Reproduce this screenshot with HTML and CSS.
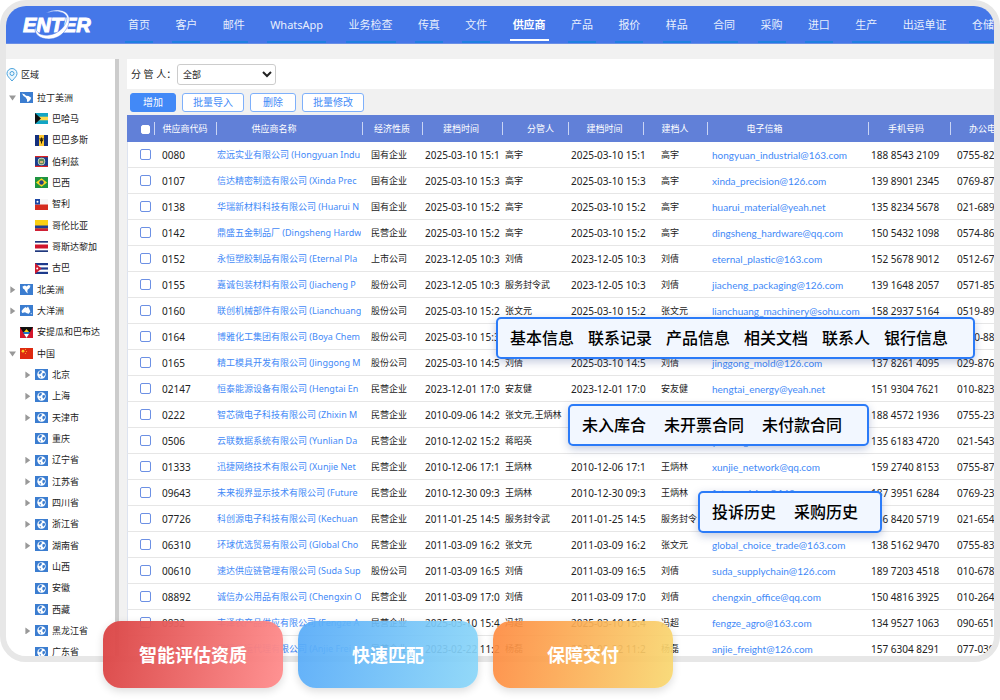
FILE: index.html
```html
<!DOCTYPE html>
<html lang="zh-CN">
<head>
<meta charset="utf-8">
<title>供应商</title>
<link rel="stylesheet" href="styles.css">
</head>
<body>
<svg class="sprite" aria-hidden="true">
  <symbol id="i-pin" viewBox="0 0 12 14"><path d="M6 13C3 9.500 1 8 1 5.500a5 5 0 0 1 10 0C11 8 9 9.500 6 13z" fill="#eef7fd" stroke="#4ba3dc"/><circle cx="6" cy="5.500" r="2" fill="none" stroke="#4ba3dc"/></symbol>
  <symbol id="i-globe" viewBox="0 0 13 11"><rect width="13" height="11" fill="#3b7dd0"/><circle cx="6.500" cy="5.500" r="4.200" fill="#fff"/><path d="M4.600 2.200l1.800-.4.600 1.400-1.200 1L5 5.400 3.400 4.200zM7.400 4.400l2-.6.800 1.600-1.600 2.400-1.200-1.400zM4.400 6.800l1.600.8-.4 1.400z" fill="#3b7dd0"/></symbol>
  <symbol id="i-samerica" viewBox="0 0 13 11"><rect width="13" height="11" fill="#3b7dd0"/><path d="M2 1.500l2.500.8L6 3.800l2.500.2 2.700 1.700-1 2.300L8 10l-1-.5V7.500L5.500 5.200 3.500 4z" fill="#fff"/></symbol>
  <symbol id="i-namerica" viewBox="0 0 13 11"><rect width="13" height="11" fill="#3b7dd0"/><path d="M2.500 2.500L5 1.500l1.500 1L8.500 1l2 .8-1 2.400-1.800 1.300-.4 2L7.800 9.500 6 8 4.500 5.500 3 4.500z" fill="#fff"/></symbol>
  <symbol id="i-oceania" viewBox="0 0 13 11"><rect width="13" height="11" fill="#3b7dd0"/><path d="M1.500 6l1.800-2.200L5.500 2l1.200 1L8 1.500l1.500 3 .8 2-1.500 2.200-2-.5L5 7.200l-2.800.9zM10.500 8.500l1.300-.8-.5 1.800z" fill="#fff"/></symbol>
  <symbol id="f-bahamas" viewBox="0 0 13 11"><rect width="13" height="11" fill="#12a5c4"/><rect y="3.700" width="13" height="3.600" fill="#fbd94c"/><path d="M0 0l6 5.500L0 11z" fill="#111"/></symbol>
  <symbol id="f-barbados" viewBox="0 0 13 11"><rect width="13" height="11" fill="#15307e"/><rect x="4" width="5" height="11" fill="#fcc62f"/><path d="M5 3l.5 3H7.500L8 3M6.500 2.500V8.500" fill="none" stroke="#2b2208"/></symbol>
  <symbol id="f-belize" viewBox="0 0 13 11"><rect width="13" height="11" fill="#d22"/><rect y="1.200" width="13" height="8.600" fill="#1c3f8c"/><circle cx="6.500" cy="5.500" r="3.700" fill="#dfe8d6"/><circle cx="6.500" cy="5.500" r="3" fill="#5d8a57"/><path d="M5 5h3v2H5z" fill="#d9b37a"/></symbol>
  <symbol id="f-brazil" viewBox="0 0 13 11"><rect width="13" height="11" fill="#1f9440"/><path d="M6.500 1.200L12 5.500 6.500 9.800 1 5.500z" fill="#fbd81f"/><circle cx="6.500" cy="5.500" r="2.200" fill="#27407f"/></symbol>
  <symbol id="f-chile" viewBox="0 0 13 11"><rect width="13" height="11" fill="#f6f6f6"/><rect y="5.500" width="13" height="5.500" fill="#d52b1e"/><rect width="5" height="5.500" fill="#1c47a5"/><circle cx="2.500" cy="2.700" r="1" fill="#fff"/></symbol>
  <symbol id="f-colombia" viewBox="0 0 13 11"><rect width="13" height="11" fill="#fccf12"/><rect y="5.500" width="13" height="3" fill="#1c3d96"/><rect y="8.500" width="13" height="2.500" fill="#d02035"/></symbol>
  <symbol id="f-costarica" viewBox="0 0 13 11"><rect width="13" height="11" fill="#20387e"/><rect y="1.700" width="13" height="7.600" fill="#fff"/><rect y="3.500" width="13" height="4" fill="#d0142c"/></symbol>
  <symbol id="f-cuba" viewBox="0 0 13 11"><rect width="13" height="11" fill="#1d3a8c"/><rect y="2.200" width="13" height="2.200" fill="#fff"/><rect y="6.600" width="13" height="2.200" fill="#fff"/><path d="M0 0l6.500 5.500L0 11z" fill="#d01a30"/><circle cx="2.200" cy="5.500" r="1" fill="#fff"/></symbol>
  <symbol id="f-antigua" viewBox="0 0 13 11"><rect width="13" height="11" fill="#d5152c"/><path d="M0 0h13L6.500 11z" fill="#111"/><path d="M2.800 5h7.400L9 7H4z" fill="#1c74c8"/><path d="M4 7h5l-2.500 4z" fill="#fff"/><path d="M4 5l2.500-3L9 5z" fill="#fcd116"/></symbol>
  <symbol id="f-china" viewBox="0 0 13 11"><rect width="13" height="11" fill="#de2910"/><circle cx="3" cy="3.200" r="1.400" fill="#fccb2a"/><path d="M5 1h1v1H5zM6 3h1v1H6zM5 5h1v1H5z" fill="#f3a023"/></symbol>
</svg>

<div class="frame">
  <header class="topbar">
    <a class="logo" href="#" aria-label="ENTER">
      <svg viewBox="0 0 74 34" width="74" height="34">
        <text class="logo-text" x="2" y="24">ENTER</text>
        <path d="M25 5C33 0 46 1 48 9C50 19 40 31 28 31C18 31 13 26 14 18C15 25 20 28 28 27C38 26 46 17 46 10C45 3 34 2 25 5z" fill="#fff" stroke="#4577e8" stroke-width=".5"/>
      </svg>
    </a>
    <nav class="nav" id="nav"></nav>
  </header>
  <div class="body">
    <aside class="sidebar">
      <div class="side-title"><svg class="pin"><use href="#i-pin"/></svg>区域</div>
      <ul class="tree" id="tree"></ul>
    </aside>
    <main class="main">
      <form class="filter">
        <label for="owner">分 管 人：</label>
        <select id="owner"><option>全部</option></select>
      </form>
      <div class="toolbar">
        <button class="btn primary" type="button">增加</button>
        <button class="btn" type="button">批量导入</button>
        <button class="btn" type="button">删除</button>
        <button class="btn" type="button">批量修改</button>
      </div>
      <table class="grid">
        <colgroup>
          <col class="c-check"><col class="c-code"><col class="c-name"><col class="c-kind"><col class="c-time"><col class="c-owner"><col class="c-time2"><col class="c-creator"><col class="c-mail"><col class="c-phone"><col>
        </colgroup>
        <thead><tr>
          <th><input type="checkbox" aria-label="全选"></th><th>供应商代码</th><th class="h-name">供应商名称</th><th>经济性质</th><th class="h-time">建档时间</th><th class="h-owner">分管人</th><th class="h-time">建档时间</th><th>建档人</th><th class="h-mail">电子信箱</th><th class="h-phone">手机号码</th><th class="h-office">办公电话</th>
        </tr></thead>
        <tbody id="rows"></tbody>
      </table>
    </main>
  </div>
</div>

<div class="pop pop-info"><span>基本信息</span><span>联系记录</span><span>产品信息</span><span>相关文档</span><span>联系人</span><span>银行信息</span></div>
<div class="pop pop-contract"><span>未入库合</span><span>未开票合同</span><span>未付款合同</span></div>
<div class="pop pop-history"><span>投诉历史</span><span>采购历史</span></div>

<div class="features">
  <button class="feature red" type="button">智能评估资质</button>
  <button class="feature blue" type="button">快速匹配</button>
  <button class="feature orange" type="button">保障交付</button>
</div>
<script src="script.js"></script>
</body>
</html>
```

FILE: styles.css
```css
* { box-sizing: border-box; }
body {
  margin: 0;
  position: relative;
  height: 100vh;
  overflow: hidden;
  background: #fff;
  color: #222;
  font: 9px/12px "Noto Sans", "Noto Sans CJK SC", sans-serif;
}
a { text-decoration: none; color: inherit; }
button, select, input { font: inherit; margin: 0; }
.sprite { position: absolute; width: 0; height: 0; }

.frame {
  display: flex;
  flex-direction: column;
  height: calc(100vh - 38px);
  border: 6px solid #e7e7e7;
  border-radius: 26px;
  overflow: hidden;
  background: #f1f1f1;
}

/* top bar */
.topbar {
  display: flex;
  flex: none;
  height: 38px;
  background: #4577e8;
  border-bottom: 1px solid #6a8ee6;
}
.logo { flex: none; width: 119px; padding: 2px 0 0 15px; }
.logo-text {
  font: italic bold 20px "Liberation Sans", sans-serif;
  fill: #fff;
  stroke: #fff;
}
.nav { display: flex; flex: 1; justify-content: space-between; margin-right: -3px; }
.nav a {
  display: flex;
  align-items: center;
  padding: 3px 3px 0;
  border-bottom: 2px solid #1f7fe0;
  color: #e8effd;
  font-size: 11px;
  white-space: nowrap;
}
.nav a.active { color: #fff; font-weight: bold; border-color: #fff; margin-bottom: 2px; padding-top: 5px; }

.body { display: flex; flex: 1; min-height: 0; padding-top: 15px; }

/* region tree */
.sidebar {
  display: flex;
  flex-direction: column;
  flex: none;
  width: 113px;
  background: #fff;
  border-right: 4px solid #ccc;
}
.side-title { display: flex; flex: none; align-items: center; gap: 3px; height: 28px; padding-top: 3px; }
.pin { width: 12px; height: 14px; }
.tree {
  display: grid;
  flex: 1;
  grid-auto-rows: 1fr;
  margin: 0 0 -7px;
  padding: 0;
  list-style: none;
}
.tree li { display: flex; align-items: center; gap: 4px; padding-left: 3px; min-height: 0; white-space: nowrap; }
.tree li.sub { padding-left: 18px; }
.tree svg { flex: none; width: 13px; height: 11px; }
.arrow { flex: none; width: 7px; height: 7px; background: #999; }
.arrow.none { background: none; }
.arrow.open { clip-path: polygon(0 20%, 100% 20%, 50% 90%); }
.arrow.closed { clip-path: polygon(20% 0, 90% 50%, 20% 100%); }

/* main */
.main { flex: 1; min-width: 0; margin-left: 8px; overflow: hidden; }
.filter { display: flex; align-items: center; gap: 4px; height: 30px; padding-left: 4px; background: #fff; }
.filter label { font-size: 10px; width: 42px; white-space: nowrap; }
.filter select {
  width: 99px;
  height: 21px;
  padding: 0 1px;
  border: 1px solid #ccc;
  border-radius: 3px;
  background: #fff;
  color: #222;
}
.toolbar { display: flex; align-items: center; gap: 6px; height: 26px; padding-left: 3px; }
.btn {
  min-width: 46px;
  height: 19px;
  padding: 0 10px;
  border: 1px solid #7eb0fb;
  border-radius: 3px;
  background: #fff;
  color: #4289f7;
  font-size: 10px;
}
.btn.primary { background: #4289f7; border-color: #4289f7; color: #fff; }

.grid { width: 100%; table-layout: fixed; border-collapse: separate; border-spacing: 0; background: #fff; }
.c-check { width: 28px; }
.c-code { width: 62px; }
.c-name { width: 146px; }
.c-kind { width: 60px; }
.c-time { width: 80px; }
.c-owner { width: 66px; }
.c-time2 { width: 75px; }
.c-creator { width: 64px; }
.c-mail { width: 161px; }
.c-phone { width: 82px; }
.grid th {
  position: relative;
  height: 27px;
  padding: 0 2px 0 0;
  overflow: hidden;
  background: #6180d8;
  color: #fff;
  font-weight: normal;
  white-space: nowrap;
}
.grid th:not(:last-child)::after {
  content: "";
  position: absolute;
  top: 7px;
  right: 0;
  width: 1px;
  height: 13px;
  background: #c9d4f4;
}
.grid .h-name { padding-right: 32px; }
.grid .h-time { padding-right: 4px; }
.grid .h-owner { padding: 0 0 0 9px; }
.grid .h-mail { padding-right: 48px; }
.grid .h-phone { padding-right: 8px; }
.grid .h-office { padding-left: 18px; text-align: left; }
.grid td {
  height: 26px;
  padding: 0;
  border-bottom: 1px solid #e6e6e6;
  white-space: nowrap;
}
.grid td:first-child { border-left: 1px solid #dde3f0; }
.grid td.check { padding-left: 12px; }
.grid td.code { padding-left: 7px; font-size: 10px; }
.grid td.name, .grid td.mail { color: #4289f7; }
.grid td.name div { overflow: hidden; width: 144px; }
.grid td.kind { padding-left: 8px; }
.grid td.time { padding-left: 2px; font-size: 10px; }
.grid td.owner { padding-left: 2px; }
.grid td.creator { padding-left: 17px; }
.grid td.mail { padding-left: 4px; font-family: Lato, "Noto Sans", sans-serif; font-size: 10px; }
.grid td.phone { padding-left: 2px; font-size: 10px; }
.grid td.office { padding-left: 6px; font-size: 10px; }
.grid input {
  appearance: none;
  display: block;
  width: 11px;
  height: 11px;
  border: 1px solid #6c90e4;
  border-radius: 2px;
  background: #fff;
}
.grid th input { width: 9px; height: 9px; margin: 2px 0 0 14px; border-color: #fff; }

/* floating panels */
.pop {
  position: absolute;
  display: flex;
  align-items: center;
  height: 42px;
  border: 2px solid #2b7bf8;
  border-radius: 5px;
  padding: 0 12px;
  background: #f2f7ff;
  box-shadow: 0 3px 8px rgba(40, 70, 140, .28);
  color: #000;
  font-size: 16px;
  font-weight: 500;
  line-height: 20px;
  white-space: nowrap;
}
.pop-info { left: 496px; top: 317px; gap: 14px; padding-right: 25px; }
.pop-contract { left: 568px; top: 404px; gap: 18px; padding-right: 25px; }
.pop-history { left: 698px; top: 491px; gap: 18px; padding-right: 22px; }

.features { position: absolute; left: 103px; top: 621px; display: flex; gap: 15px; }
.feature {
  width: 180px;
  height: 67px;
  border: 0;
  border-radius: 18px;
  color: #fff;
  font-size: 18px;
  font-weight: 700;
  box-shadow: 0 3px 8px rgba(0, 0, 0, .14);
}
.red { background: linear-gradient(100deg, rgba(218, 68, 68, .96), rgba(255, 142, 142, .96)); }
.blue { background: linear-gradient(100deg, rgba(86, 170, 248, .92), rgba(138, 214, 248, .92)); }
.orange { background: linear-gradient(100deg, rgba(254, 138, 64, .92), rgba(248, 216, 112, .92)); }
```

FILE: script.js
```js
const nav = ["首页", "客户", "邮件", "WhatsApp", "业务检查", "传真", "文件", "供应商", "产品", "报价", "样品", "合同", "采购", "进口", "生产", "出运单证", "仓储"];
document.getElementById("nav").innerHTML = nav
  .map(t => `<a href="#"${t === "供应商" ? ' class="active"' : ""}>${t}</a>`).join("");

// level, arrow state, icon, label
const tree = [
  [1, "open", "i-samerica", "拉丁美洲"],
  [2, "none", "f-bahamas", "巴哈马"], [2, "none", "f-barbados", "巴巴多斯"],
  [2, "none", "f-belize", "伯利兹"], [2, "none", "f-brazil", "巴西"],
  [2, "none", "f-chile", "智利"], [2, "none", "f-colombia", "哥伦比亚"],
  [2, "none", "f-costarica", "哥斯达黎加"], [2, "none", "f-cuba", "古巴"],
  [1, "closed", "i-namerica", "北美洲"], [1, "closed", "i-oceania", "大洋洲"],
  [1, "none", "f-antigua", "安提瓜和巴布达"], [1, "open", "f-china", "中国"],
  [2, "closed", "i-globe", "北京"], [2, "closed", "i-globe", "上海"],
  [2, "closed", "i-globe", "天津市"], [2, "none", "i-globe", "重庆"],
  [2, "closed", "i-globe", "辽宁省"], [2, "closed", "i-globe", "江苏省"],
  [2, "closed", "i-globe", "四川省"], [2, "closed", "i-globe", "浙江省"],
  [2, "closed", "i-globe", "湖南省"], [2, "none", "i-globe", "山西"],
  [2, "none", "i-globe", "安徽"], [2, "none", "i-globe", "西藏"],
  [2, "closed", "i-globe", "黑龙江省"], [2, "none", "i-globe", "广东省"]
];
document.getElementById("tree").innerHTML = tree
  .map(([level, state, icon, label]) => `<li${level === 2 ? ' class="sub"' : ""}><i class="arrow ${state}"></i><svg><use href="#${icon}"/></svg>${label}</li>`).join("");

// code | name | kind | time | owner | creator | mail | phone | office
const rows = `0080|宏远实业有限公司 (Hongyuan Indu|国有企业|2025-03-10 15:1|高宇|高宇|hongyuan_industrial@163.com|188 8543 2109|0755-82
0107|信达精密制造有限公司 (Xinda Prec|国有企业|2025-03-10 15:3|高宇|高宇|xinda_precision@126.com|139 8901 2345|0769-87
0138|华瑞新材料科技有限公司 (Huarui N|国有企业|2025-03-10 15:2|高宇|高宇|huarui_material@yeah.net|135 8234 5678|021-689
0142|鼎盛五金制品厂 (Dingsheng Hardw|民营企业|2025-03-10 15:2|高宇|高宇|dingsheng_hardware@qq.com|150 5432 1098|0574-86
0152|永恒塑胶制品有限公司 (Eternal Pla|上市公司|2023-12-05 10:3|刘倩|刘倩|eternal_plastic@163.com|152 5678 9012|0512-67
0155|嘉诚包装材料有限公司 (Jiacheng P|股份公司|2023-12-05 10:3|服务封令武|刘倩|jiacheng_packaging@126.com|139 1648 2057|0571-85
0160|联创机械部件有限公司 (Lianchuang|股份公司|2025-03-10 15:2|张文元|张文元|lianchuang_machinery@sohu.com|158 2937 5164|0519-89
0164|博雅化工集团有限公司 (Boya Chem|股份公司|2025-03-10 15:3|刘倩|刘倩|boya_chemical@163.com|136 7254 8109|0760-88
0165|精工模具开发有限公司 (Jinggong M|股份公司|2025-03-10 14:5|刘倩|刘倩|jinggong_mold@126.com|137 8261 4095|029-876
02147|恒泰能源设备有限公司 (Hengtai En|民营企业|2023-12-01 17:0|安友健|安友健|hengtai_energy@yeah.net|151 9304 7621|010-823
0222|智芯微电子科技有限公司 (Zhixin M|民营企业|2010-09-06 14:2|张文元,王炳林|张文元|zhixin_micro@163.com|188 4572 1936|0755-23
0506|云联数据系统有限公司 (Yunlian Da|民营企业|2010-12-02 15:2|蒋昭英|蒋昭英|yunlian_data@126.com|135 6183 4720|021-543
01333|迅捷网络技术有限公司 (Xunjie Net|民营企业|2010-12-06 17:1|王炳林|王炳林|xunjie_network@qq.com|159 2740 8153|0755-87
09643|未来视界显示技术有限公司 (Future|民营企业|2010-12-30 09:3|王炳林|王炳林|future_vision@163.com|187 3951 6284|0769-23
07726|科创源电子科技有限公司 (Kechuan|民营企业|2011-01-25 14:5|服务封令武|服务封令|kechuang@163.com|136 8420 5719|021-654
06310|环球优选贸易有限公司 (Global Cho|民营企业|2011-03-09 16:2|张文元|张文元|global_choice_trade@163.com|138 5162 9470|0755-83
00610|速达供应链管理有限公司 (Suda Sup|股份公司|2011-03-09 16:5|刘倩|刘倩|suda_supplychain@126.com|189 7203 4518|010-678
08892|诚信办公用品有限公司 (Chengxin O|民营企业|2011-03-09 17:0|刘倩|刘倩|chengxin_office@qq.com|150 4816 3925|010-264
0932|丰泽农产品供应有限公司 (Fengze A|民营企业|2025-03-10 15:4|冯超|冯超|fengze_agro@163.com|134 9527 1063|090-651
0945|安捷货运代理有限公司 (Anjie Frei|民营企业|2023-02-22 11:2|杨磊|杨磊|anjie_freight@126.com|157 6304 8291|077-030`;
document.getElementById("rows").innerHTML = rows.split("\n").map(line => {
  const [code, name, kind, time, owner, creator, mail, phone, office] = line.split("|");
  return `<tr><td class="check"><input type="checkbox" aria-label="${code}"></td><td class="code">${code}</td><td class="name"><div><a href="#">${name}</a></div></td><td class="kind">${kind}</td><td class="time">${time}</td><td class="owner">${owner}</td><td class="time">${time}</td><td class="creator">${creator}</td><td class="mail"><a href="mailto:${mail}">${mail}</a></td><td class="phone">${phone}</td><td class="office">${office}</td></tr>`;
}).join("");
```
